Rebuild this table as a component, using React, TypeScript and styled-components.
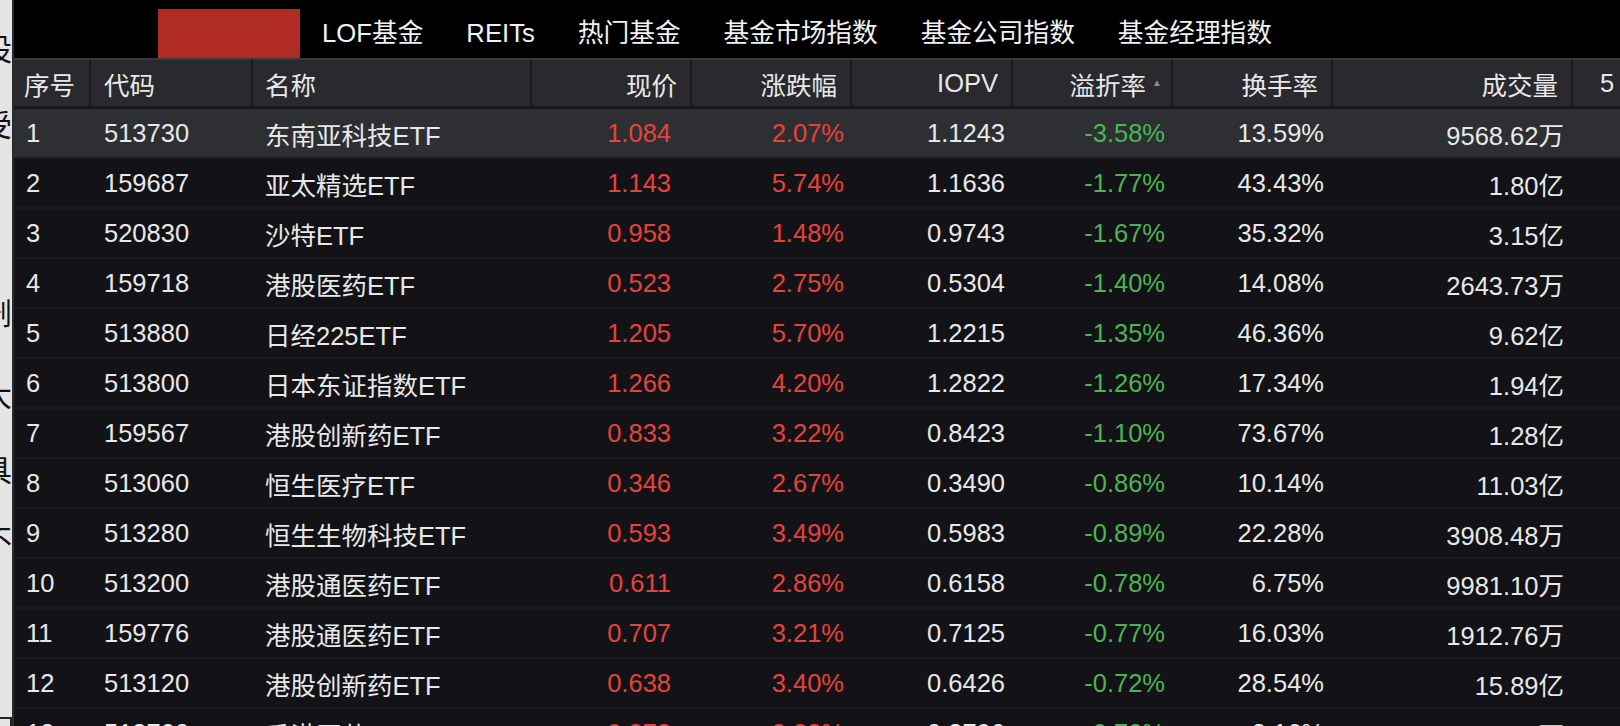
import React from "react";
import styled, { createGlobalStyle } from "styled-components";

const GlobalStyle = createGlobalStyle`
  html, body {
    margin: 0;
    padding: 0;
    background: #131317;
    overflow: hidden;
  }
  body {
    font-family: "Liberation Sans", "Noto Sans CJK SC", sans-serif;
  }
`;

const COLS = "77px 162px 279px 160px 160px 161px 160px 160px 240px 1fr";

const Page = styled.div`
  display: flex;
  width: 1620px;
  height: 726px;
  overflow: hidden;
`;

const SideStrip = styled.div`
  width: 12px;
  flex: none;
  background: #e4e4e4;
  border-right: 2px solid #2b2b2b;
  display: flex;
  flex-direction: column;
  overflow: hidden;
`;

const StripChar = styled.span<{ $mt: number }>`
  display: block;
  flex: none;
  margin-top: ${(p) => p.$mt}px;
  margin-left: -18px;
  width: 30px;
  height: 30px;
  font-size: 30px;
  line-height: 30px;
  color: #111;
  font-family: "Noto Sans CJK SC", sans-serif;
`;

const StripBox = styled.div<{ $mt: number }>`
  flex: none;
  margin-top: ${(p) => p.$mt}px;
  margin-left: -12px;
  width: 20px;
  height: 20px;
  border: 2px solid #222;
`;

const Main = styled.div`
  flex: 1;
  min-width: 0;
  display: flex;
  flex-direction: column;
  background: #131317;
`;

const NavBar = styled.div`
  height: 58px;
  flex: none;
  background: #000;
  display: flex;
  align-items: center;
  gap: 43px;
  padding-left: 144px;
`;

const RedTab = styled.div`
  width: 142px;
  height: 49px;
  align-self: flex-end;
  background: #b12b25;
  margin-right: -21px;
`;

const NavItem = styled.div`
  font-size: 25.7px;
  line-height: 26px;
  padding-top: 8px;
  color: #f2f2f2;
  white-space: nowrap;
`;

const HeaderRow = styled.div`
  display: grid;
  grid-template-columns: ${COLS};
  height: 46px;
  flex: none;
  background: #29292e;
  border-top: 2px solid #38383d;
  border-bottom: 3px solid #18181c;
`;

const HeadCell = styled.div<{ $right?: boolean; $pl?: number; $pr?: number }>`
  display: flex;
  align-items: center;
  justify-content: ${(p) => (p.$right ? "flex-end" : "flex-start")};
  padding-left: ${(p) => p.$pl ?? 10}px;
  padding-right: ${(p) => p.$pr ?? 13}px;
  border-right: 2px solid #1c1c20;
  color: #e8e8e8;
  font-size: 25.5px;
  white-space: nowrap;
  overflow: hidden;
  &:last-child {
    border-right: none;
  }
`;

const SortArrow = styled.span`
  font-size: 10px;
  color: #8c8c90;
  margin-left: 6px;
  margin-top: -2px;
`;

const Row = styled.div<{ $selected?: boolean }>`
  display: grid;
  grid-template-columns: ${COLS};
  height: 50px;
  flex: none;
  box-sizing: border-box;
  background: ${(p) => (p.$selected ? "#2e2f33" : "#131317")};
  border-bottom: 2px solid #1c1c20;
`;

const Cell = styled.div<{ $right?: boolean; $pl?: number; $pr?: number; $color?: string }>`
  display: flex;
  align-items: center;
  justify-content: ${(p) => (p.$right ? "flex-end" : "flex-start")};
  padding-left: ${(p) => p.$pl ?? 0}px;
  padding-right: ${(p) => p.$pr ?? 8}px;
  color: ${(p) => p.$color ?? "#e8e8e8"};
  font-size: 25.5px;
  white-space: nowrap;
  overflow: hidden;
`;

const RED = "#e6423d";
const GREEN = "#4cb451";

type Fund = [string, string, string, string, string, string, string, string, string];

const rows: Fund[] = [
  ["1", "513730", "东南亚科技ETF", "1.084", "2.07%", "1.1243", "-3.58%", "13.59%", "9568.62万"],
  ["2", "159687", "亚太精选ETF", "1.143", "5.74%", "1.1636", "-1.77%", "43.43%", "1.80亿"],
  ["3", "520830", "沙特ETF", "0.958", "1.48%", "0.9743", "-1.67%", "35.32%", "3.15亿"],
  ["4", "159718", "港股医药ETF", "0.523", "2.75%", "0.5304", "-1.40%", "14.08%", "2643.73万"],
  ["5", "513880", "日经225ETF", "1.205", "5.70%", "1.2215", "-1.35%", "46.36%", "9.62亿"],
  ["6", "513800", "日本东证指数ETF", "1.266", "4.20%", "1.2822", "-1.26%", "17.34%", "1.94亿"],
  ["7", "159567", "港股创新药ETF", "0.833", "3.22%", "0.8423", "-1.10%", "73.67%", "1.28亿"],
  ["8", "513060", "恒生医疗ETF", "0.346", "2.67%", "0.3490", "-0.86%", "10.14%", "11.03亿"],
  ["9", "513280", "恒生生物科技ETF", "0.593", "3.49%", "0.5983", "-0.89%", "22.28%", "3908.48万"],
  ["10", "513200", "港股通医药ETF", "0.611", "2.86%", "0.6158", "-0.78%", "6.75%", "9981.10万"],
  ["11", "159776", "港股通医药ETF", "0.707", "3.21%", "0.7125", "-0.77%", "16.03%", "1912.76万"],
  ["12", "513120", "港股创新药ETF", "0.638", "3.40%", "0.6426", "-0.72%", "28.54%", "15.89亿"],
  ["13", "513700", "香港医药ETF", "0.372", "3.33%", "0.3796", "-0.70%", "3.16%", "5129.71万"],
];

const navItems = ["LOF基金", "REITs", "热门基金", "基金市场指数", "基金公司指数", "基金经理指数"];

export default function App() {
  return (
    <>
      <GlobalStyle />
      <Page>
        <SideStrip>
          <StripChar $mt={32}>设</StripChar>
          <StripChar $mt={46}>受</StripChar>
          <StripChar $mt={158}>剧</StripChar>
          <StripChar $mt={52}>大</StripChar>
          <StripChar $mt={45}>具</StripChar>
          <StripChar $mt={40}>不</StripChar>
          <StripBox $mt={164} />
        </SideStrip>
        <Main>
          <NavBar>
            <RedTab />
            {navItems.map((n) => (
              <NavItem key={n}>{n}</NavItem>
            ))}
          </NavBar>
          <HeaderRow>
            <HeadCell>序号</HeadCell>
            <HeadCell $pl={13}>代码</HeadCell>
            <HeadCell $pl={12}>名称</HeadCell>
            <HeadCell $right>现价</HeadCell>
            <HeadCell $right>涨跌幅</HeadCell>
            <HeadCell $right>IOPV</HeadCell>
            <HeadCell $right $pr={9}>
              溢折率<SortArrow>▲</SortArrow>
            </HeadCell>
            <HeadCell $right>换手率</HeadCell>
            <HeadCell $right>成交量</HeadCell>
            <HeadCell $pl={27}>5</HeadCell>
          </HeaderRow>
          {rows.map((r, i) => (
            <Row key={r[0]} $selected={i === 0}>
              <Cell $pl={12}>{r[0]}</Cell>
              <Cell $pl={13}>{r[1]}</Cell>
              <Cell $pl={12}>{r[2]}</Cell>
              <Cell $right $pr={21} $color={RED}>{r[3]}</Cell>
              <Cell $right $color={RED}>{r[4]}</Cell>
              <Cell $right>{r[5]}</Cell>
              <Cell $right $color={GREEN}>{r[6]}</Cell>
              <Cell $right $pr={9}>{r[7]}</Cell>
              <Cell $right $pr={9}>{r[8]}</Cell>
              <Cell />
            </Row>
          ))}
        </Main>
      </Page>
    </>
  );
}
